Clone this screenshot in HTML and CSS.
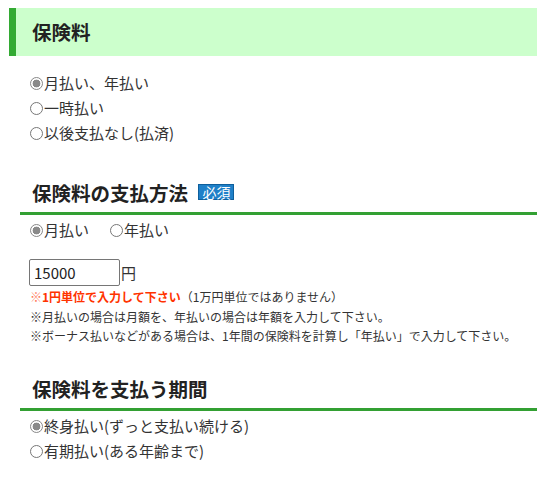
FILE: index.html
```html
<!DOCTYPE html>
<html lang="ja">

<head>
    <meta charset="UTF-8" />
    <meta name="viewport" content="width=device-width, initial-scale=1" />
    <title>保険料</title>
    <link rel="stylesheet" href="styles.css">
</head>

<body>
    <h1 class="band-title">保険料</h1>
    <div class="section">
        <label class="row"><input type="radio" name="kind" checked>月払い、年払い</label>
        <label class="row"><input type="radio" name="kind">一時払い</label>
        <label class="row"><input type="radio" name="kind">以後支払なし(払済)</label>
    </div>

    <h2 class="line-title">保険料の支払方法 <span class="badge">必須</span></h2>
    <div class="section">
        <div class="row inline">
            <label><input type="radio" name="pay" checked>月払い</label>
            <label><input type="radio" name="pay">年払い</label>
        </div>
        <div class="amount">
            <input type="text" class="amount-input" value="15000">円
        </div>
        <p class="note"><span class="warn"><span class="mark">※</span>1円単位で入力して下さい</span>（1万円単位ではありません）</p>
        <p class="note">※月払いの場合は月額を、年払いの場合は年額を入力して下さい。</p>
        <p class="note">※ボーナス払いなどがある場合は、1年間の保険料を計算し「年払い」で入力して下さい。</p>
    </div>

    <h2 class="line-title last">保険料を支払う期間</h2>
    <div class="section">
        <label class="row"><input type="radio" name="term" checked>終身払い(ずっと支払い続ける)</label>
        <label class="row"><input type="radio" name="term">有期払い(ある年齢まで)</label>
    </div>
</body>

</html>
```

FILE: styles.css
```css
/* Base */
* {
    box-sizing: border-box;
}

body {
    margin: 8px 0 0 9px;
    color: #333;
    font-family: "Noto Sans CJK JP", "Noto Sans", sans-serif;
    font-size: 15px;
    line-height: 25px;
    background: #fff;
}

/* Headings */
.band-title {
    margin: 0;
    padding: 9px 16px 10px;
    background-color: #ccffcc;
    border-left: 7px solid #33aa33;
    color: #222;
    font-size: 19.5px;
    font-weight: 700;
    line-height: 29px;
}

.line-title {
    margin: 33px 0 0 11px;
    padding: 0 0 5px 12px;
    border-bottom: 3px solid #33a033;
    color: #222;
    font-size: 19.5px;
    font-weight: 700;
    line-height: 29px;
}

.line-title.last {
    margin-top: 28px;
}

.badge {
    display: inline-block;
    margin-left: 6px;
    padding: 0 3px;
    background-color: #1f80c8;
    border: 1px solid #0e5f9c;
    color: #fff;
    font-size: 14px;
    font-weight: 400;
    line-height: 14px;
    vertical-align: 3px;
}

/* Sections */
.section {
    padding: 2px 0 0 21px;
}

.section:first-of-type {
    padding-top: 14px;
}

.row {
    display: block;
}

.row.inline {
    display: flex;
    gap: 21px;
}

input[type="radio"] {
    appearance: none;
    width: 13px;
    height: 13px;
    margin: 0 1px 0 0;
    border: 1px solid #777;
    border-radius: 50%;
    background: #fff;
    vertical-align: -1px;
}

input[type="radio"]:checked {
    border-color: #888;
    background: radial-gradient(circle, #8a8a8a 0 3.6px, #fff 4.2px);
}

.amount {
    margin-top: 17px;
    line-height: 27px;
}

.amount-input {
    width: 91px;
    height: 27px;
    margin: 0 1px 0 -1px;
    padding: 0 4px;
    border: 1px solid #767676;
    border-radius: 2px;
    color: #222;
    font-family: inherit;
    font-size: 15px;
    vertical-align: top;
}

.note {
    margin: 0;
    font-size: 12px;
    line-height: 19.5px;
}

.note:first-of-type {
    margin-top: 1px;
}

.warn {
    color: #ff3300;
    font-weight: 700;
}

.mark {
    color: #ff7755;
}

.section:last-child {
    padding-bottom: 10px;
}
```
